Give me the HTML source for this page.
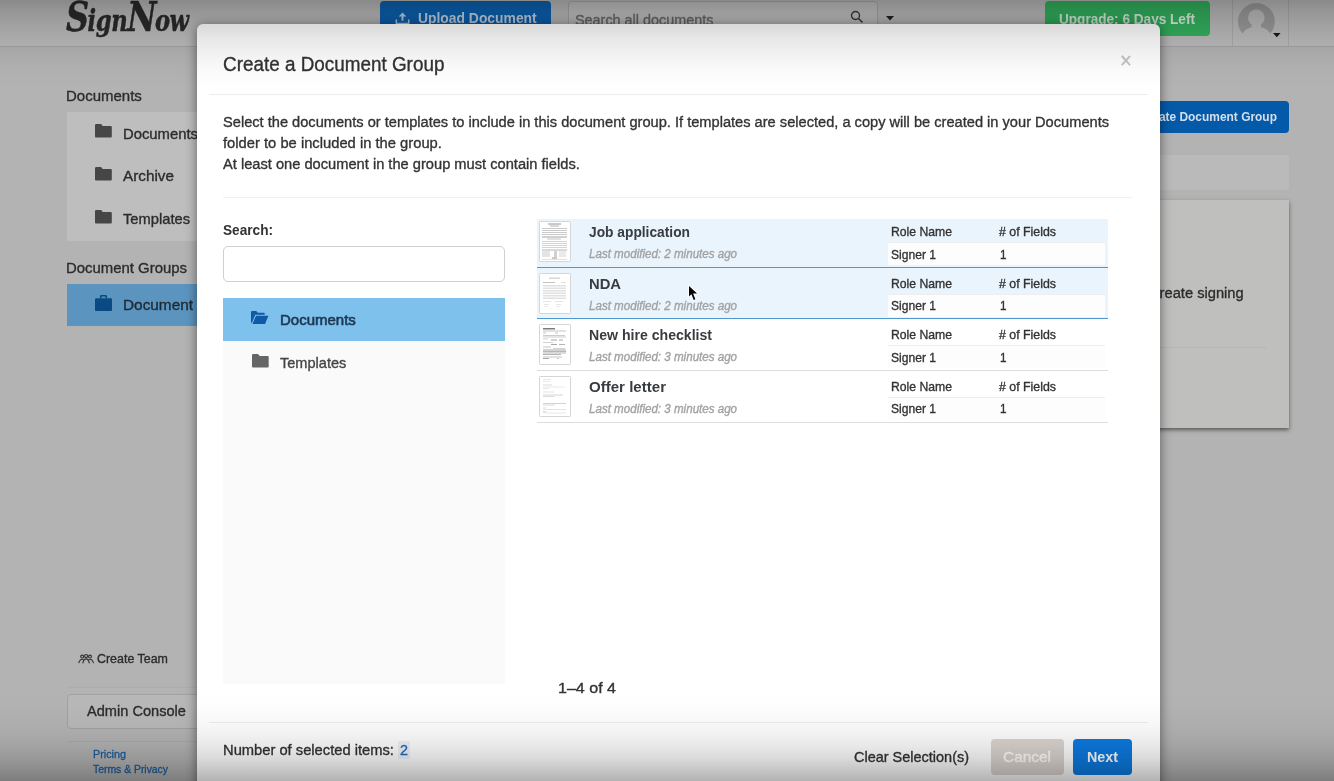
<!DOCTYPE html>
<html><head><meta charset="utf-8"><title>SignNow</title>
<style>
*{box-sizing:border-box;margin:0;padding:0}
html,body{width:1334px;height:781px;overflow:hidden}
body{background:#b3b3b3;font-family:"Liberation Sans",sans-serif;color:#333;position:relative}
.a{position:absolute}
.t{position:absolute;white-space:nowrap;line-height:1;transform-origin:0 50%;filter:blur(.3px);-webkit-text-stroke:.35px currentColor}
svg{position:absolute;overflow:visible}
#hdr{left:0;top:0;width:1334px;height:47px;background:#bcbcbc;border-bottom:1px solid #a4a4a4}
#logo{left:66px;top:0;height:46px;font-family:"DejaVu Serif","Liberation Serif",serif;font-style:italic;font-weight:bold;font-size:29px;line-height:35px;color:#2a2a2a;transform-origin:0 0;transform:scaleX(.78);-webkit-text-stroke:.5px #2a2a2a;letter-spacing:-.5px}#logo b{font-size:41px;letter-spacing:-2px}
#upload{left:380px;top:1px;width:171px;height:37px;background:#0c62b2;border-radius:4px}
#searchbox{left:568px;top:1px;width:310px;height:37px;background:#c3c3c3;border:1px solid #a8a8a8;border-radius:4px}
#upgrade{left:1045px;top:1px;width:165px;height:35px;background:#33b25e;border-radius:4px}
.vline{top:0;width:1px;height:46px;background:#ababab}
#sidepanel{left:67px;top:112px;width:131px;height:129px;background:#bebebe}
#sidesel{left:67px;top:284px;width:131px;height:42px;background:#5b95bf}
#admin{left:67px;top:694px;width:135px;height:35px;border:1px solid #a2a2a2;border-radius:4px;background:#b8b8b8}
.hl{height:1px;background:#ababab}
#cdg{left:1120px;top:101px;width:169px;height:32px;background:#045aa9;border-radius:4px}
#rbar{left:1150px;top:155px;width:139px;height:35px;background:#bababa}
#rpanel{left:1150px;top:200px;width:139px;height:228px;background:#bfbfbd;box-shadow:0 2px 4px rgba(0,0,0,.5)}
#modal{left:197px;top:24px;width:963px;height:770px;background:#fff;border-radius:6px;box-shadow:0 2px 12px rgba(0,0,0,.5)}
.ml{height:1px;background:#ececec}
#sinput{left:223px;top:246px;width:282px;height:36px;border:1px solid #d0d0d0;border-radius:5px;background:#fff}
#lpanel{left:223px;top:298px;width:282px;height:386px;background:#fafafa}
#lsel{left:223px;top:298px;width:282px;height:43px;background:#7ec1ed}
.row{left:537px;width:571px;height:52px}
.sel{background:#e9f4fd;border-bottom:1px solid #4f97cf}
.uns{border-bottom:1px solid #ddd}
.thumb{left:539px;width:32px;height:41px;background:#fff;border:1px solid #d6d6d6}
.sub{left:888px;width:217px;height:23px;background:#fdfdfd;border-top:1px solid #eceef0}
#cancel{left:991px;top:739px;width:73px;height:36px;background:#dcd6d1;border-radius:4px}
#next{left:1073px;top:739px;width:59px;height:36px;background:#0c7ae0;border-radius:4px}
#selbadge{left:398px;top:741px;width:12px;height:18px;background:#edf3f9}
#gtop{left:0;top:0;width:1334px;height:90px;background:linear-gradient(to bottom,rgba(0,0,0,.27) 0,rgba(0,0,0,.20) 12px,rgba(0,0,0,.15) 24px,rgba(0,0,0,.09) 40px,rgba(0,0,0,.05) 55px,rgba(0,0,0,.02) 70px,rgba(0,0,0,0) 90px)}
#gbot{left:0;top:690px;width:1334px;height:91px;background:linear-gradient(to bottom,rgba(0,0,0,0) 0,rgba(0,0,0,.008) 16px,rgba(0,0,0,.027) 32px,rgba(0,0,0,.047) 42px,rgba(0,0,0,.086) 55px,rgba(0,0,0,.145) 68px,rgba(0,0,0,.224) 80px,rgba(0,0,0,.30) 91px)}
</style></head><body>
<div id="hdr" class="a"></div>
<div id="logo" class="t"><b>S</b>ign<b>N</b>ow</div>
<div id="upload" class="a"></div>
<svg style="left:395.3px;top:11.6px" width="15" height="12.4" viewBox="0 0 16 14"><path d="M8 .6l4.4 4.6H9.1v4.6H6.9V5.2H3.6z" fill="#b9cfe6"/><path d="M1 8.6v4.4h14V8.6" fill="none" stroke="#b9cfe6" stroke-width="1.7"/></svg>
<div id="searchbox" class="a"></div>
<svg style="left:850px;top:10px" width="14" height="14" viewBox="0 0 14 14"><circle cx="5.5" cy="5.5" r="4" fill="none" stroke="#3a3a3a" stroke-width="1.4"/><path d="M8.5 8.5l4 4" stroke="#3a3a3a" stroke-width="1.6"/></svg>
<svg style="left:886px;top:16px" width="8" height="5" viewBox="0 0 8 5"><path d="M0 0h8l-4 4.5z" fill="#222"/></svg>
<div id="upgrade" class="a"></div>
<div class="a vline" style="left:1232px"></div>
<div class="a vline" style="left:1288px"></div>
<svg style="left:1238.1px;top:2.6px" width="36.8" height="36.8" viewBox="0 0 36.8 36.8"><circle cx="18.4" cy="18.4" r="18.4" fill="#9b9b9b"/><g fill="#bcbcbc"><circle cx="18.3" cy="14.7" r="8.3"/><path d="M13.6 20.5h9.4v4.5h-9.4z"/><path d="M2.5 38C3 28 10 23.8 18.4 23.8S33.8 28 34.3 38z"/></g></svg>
<svg style="left:1272.6px;top:33.2px" width="7.6" height="4.4" viewBox="0 0 7 4"><path d="M0 0h7l-3.5 4z" fill="#1a1a1a"/></svg>

<div id="sidepanel" class="a"></div>
<div id="sidesel" class="a"></div>
<svg style="left:94.8px;top:124.2px" width="16.8" height="13.6" viewBox="0 0 17 14" preserveAspectRatio="none"><path d="M0 1.2Q0 0 1.2 0h5l1.6 2H16q1 0 1 1v10q0 1-1 1H1q-1 0-1-1z" fill="#464646"/></svg>
<svg style="left:94.8px;top:167.1px" width="16.8" height="13.6" viewBox="0 0 17 14" preserveAspectRatio="none"><path d="M0 1.2Q0 0 1.2 0h5l1.6 2H16q1 0 1 1v10q0 1-1 1H1q-1 0-1-1z" fill="#464646"/></svg>
<svg style="left:94.8px;top:210.2px" width="16.8" height="13.6" viewBox="0 0 17 14" preserveAspectRatio="none"><path d="M0 1.2Q0 0 1.2 0h5l1.6 2H16q1 0 1 1v10q0 1-1 1H1q-1 0-1-1z" fill="#464646"/></svg>
<svg style="left:95px;top:295px" width="17" height="16" viewBox="0 0 17 16"><path d="M0 4.2q0-1 1-1h15q1 0 1 1V15q0 1-1 1H1q-1 0-1-1zM5 3V1.2Q5 0 6.2 0h4.6Q12 0 12 1.2V3h-1.6V1.6H6.6V3z" fill="#0a4a82"/></svg>
<svg style="left:77.8px;top:653.5px" width="16.2" height="9.8" viewBox="0 0 16 10"><g fill="none" stroke="#333" stroke-width="1.15"><circle cx="4" cy="2.6" r="1.5"/><circle cx="8" cy="2.1" r="1.6"/><circle cx="12" cy="2.6" r="1.5"/><path d="M0.4 9.4Q1.6 5.4 4 5.4Q5.4 5.4 6 7M4.6 9.6Q5.6 5 8 5Q10.4 5 11.4 9.6M10 7Q10.6 5.4 12 5.4Q14.4 5.4 15.6 9.4"/></g></svg>
<div class="a hl" style="left:67px;top:687px;width:131px;background:#adadad"></div>
<div id="admin" class="a"></div>
<div class="a hl" style="left:67px;top:741px;width:131px;background:#aaa"></div>
<div id="cdg" class="a"></div>
<div id="rbar" class="a"></div>
<div id="rpanel" class="a"></div>
<div class="a hl" style="left:1150px;top:347px;width:116px;background:#b6b6b4"></div>
<div class="t" style="left:418.3px;top:10.4px;font-size:15.0px;color:#c3d6ea;font-weight:bold;-webkit-text-stroke:0;transform:scaleX(0.925);">Upload Document</div>
<div class="t" style="left:574.6px;top:11.8px;font-size:15.0px;color:#6a6a6a;transform:scaleX(0.959);">Search all documents</div>
<div class="t" style="left:1059.0px;top:10.8px;font-size:15.0px;color:#d9efe0;font-weight:bold;-webkit-text-stroke:0;transform:scaleX(0.906);">Upgrade: 6 Days Left</div>
<div class="t" style="left:66.0px;top:87.8px;font-size:15.0px;color:#2c2c2c;">Documents</div>
<div class="t" style="left:123.0px;top:125.8px;font-size:15.0px;color:#2c2c2c;transform:scaleX(0.988);">Documents</div>
<div class="t" style="left:123.0px;top:168.3px;font-size:15.0px;color:#2c2c2c;transform:scaleX(1.019);">Archive</div>
<div class="t" style="left:123.0px;top:211.3px;font-size:15.0px;color:#2c2c2c;transform:scaleX(0.980);">Templates</div>
<div class="t" style="left:66.0px;top:259.8px;font-size:15.0px;color:#2c2c2c;transform:scaleX(0.994);">Document Groups</div>
<div class="t" style="left:123.0px;top:297.3px;font-size:15.0px;color:#1d2a35;transform:scaleX(1.024);">Document</div>
<div class="t" style="left:96.8px;top:652.4px;font-size:13.0px;color:#2c2c2c;transform:scaleX(0.956);">Create Team</div>
<div class="t" style="left:87.0px;top:703.0px;font-size:15.0px;color:#2c2c2c;transform:scaleX(0.973);">Admin Console</div>
<div class="t" style="left:93.0px;top:748.7px;font-size:11.0px;color:#1a5c9e;transform:scaleX(0.981);-webkit-text-stroke:.3px #1a5c9e;">Pricing</div>
<div class="t" style="left:93.0px;top:763.7px;font-size:11.0px;color:#1a5c9e;transform:scaleX(0.944);-webkit-text-stroke:.3px #1a5c9e;">Terms &amp; Privacy</div>
<div class="t" style="left:1139.0px;top:110.3px;font-size:13.0px;color:#d4dfec;font-weight:bold;-webkit-text-stroke:0;transform:scaleX(0.918);">Create Document Group</div>
<div class="t" style="left:1149.0px;top:285.2px;font-size:15.4px;color:#2c2c2c;transform:scaleX(0.954);">Create signing</div>

<div id="modal" class="a"></div>
<div class="a ml" style="left:209px;top:94px;width:939px"></div>
<div class="a ml" style="left:223px;top:197px;width:909px;background:#f1f1f1"></div>
<div class="a ml" style="left:209px;top:722px;width:939px"></div>
<div id="sinput" class="a"></div>
<div id="lpanel" class="a"></div>
<div id="lsel" class="a"></div>
<svg style="left:251px;top:311px" width="17.4" height="13.1" viewBox="0 0 19 14" preserveAspectRatio="none"><path d="M0 1.2Q0 0 1.2 0h4.6l1.5 1.8H14q1 0 1 1V4H4.6L1.5 11.5 0 13z M5.4 5H19l-3.6 9H1.6z" fill="#0f5aa6"/></svg>
<svg style="left:251.5px;top:353.8px" width="16.7" height="13.4" viewBox="0 0 17 14" preserveAspectRatio="none"><path d="M0 1.2Q0 0 1.2 0h5l1.6 2H16q1 0 1 1v10q0 1-1 1H1q-1 0-1-1z" fill="#666"/></svg>

<div class="a row sel" style="top:219px;height:49px"></div>
<div class="a row sel" style="top:268px;height:51px"></div>
<div class="a row uns" style="top:319px;height:52px"></div>
<div class="a row uns" style="top:371px;height:52px"></div>
<svg style="left:539px;top:221px" width="32" height="41" viewBox="0 0 32 41"><rect x=".5" y=".5" width="31" height="40" rx=".8" fill="#fff" stroke="#d6d6d6"/><g opacity="0.9" style="filter:blur(.35px)"><rect x="9.0" y="2.5" width="13.0" height="1.0" fill="#888"/><rect x="11.0" y="4.5" width="9.0" height="1.0" fill="#aaa"/><rect x="3.0" y="7.0" width="25.0" height="1.0" fill="#c4c4c4"/><rect x="3.0" y="9.0" width="25.0" height="1.0" fill="#c4c4c4"/><rect x="3.0" y="11.0" width="25.0" height="1.0" fill="#c4c4c4"/><rect x="3.0" y="13.0" width="25.0" height="1.0" fill="#c4c4c4"/><rect x="3.0" y="15.5" width="25.0" height="1.0" fill="#999"/><rect x="8.0" y="17.5" width="14.0" height="1.0" fill="#bbb"/><rect x="3.0" y="20.0" width="25.0" height="1.0" fill="#cfcfcf"/><rect x="3.0" y="22.0" width="25.0" height="1.0" fill="#cfcfcf"/><rect x="3.0" y="24.0" width="25.0" height="1.0" fill="#cfcfcf"/><rect x="3.0" y="26.0" width="25.0" height="1.0" fill="#cfcfcf"/><rect x="3.0" y="28.5" width="25.0" height="1.0" fill="#aaa"/><rect x="3.0" y="30.5" width="8.0" height="1.0" fill="#c4c4c4"/><rect x="15.0" y="30.5" width="3.0" height="1.0" fill="#999"/><rect x="20.0" y="30.5" width="7.0" height="1.0" fill="#d0d0d0"/><rect x="3.0" y="32.5" width="8.0" height="1.0" fill="#c4c4c4"/><rect x="15.0" y="32.5" width="3.0" height="1.0" fill="#999"/><rect x="20.0" y="32.5" width="7.0" height="1.0" fill="#d0d0d0"/><rect x="3.0" y="34.5" width="8.0" height="1.0" fill="#c4c4c4"/><rect x="15.0" y="34.5" width="3.0" height="1.0" fill="#999"/><rect x="20.0" y="34.5" width="7.0" height="1.0" fill="#d0d0d0"/><rect x="13.0" y="36.5" width="5.0" height="1.0" fill="#888"/><rect x="3.0" y="38.0" width="25.0" height="1.0" fill="#ddd"/></g></svg>
<div class="a sub" style="top:242px"></div>
<svg style="left:539px;top:273px" width="32" height="41" viewBox="0 0 32 41"><rect x=".5" y=".5" width="31" height="40" rx=".8" fill="#fff" stroke="#d6d6d6"/><g opacity="0.6" style="filter:blur(.35px)"><rect x="10.0" y="4.5" width="11.0" height="1.5" fill="#bbb"/><rect x="4.0" y="9.0" width="12.0" height="1.0" fill="#999"/><rect x="22.0" y="9.0" width="5.0" height="1.0" fill="#ccc"/><rect x="4.0" y="12.0" width="23.0" height="1.0" fill="#cdcdcd"/><rect x="4.0" y="13.5" width="23.0" height="1.0" fill="#cdcdcd"/><rect x="4.0" y="15.0" width="23.0" height="1.0" fill="#cdcdcd"/><rect x="4.0" y="17.0" width="23.0" height="1.0" fill="#cdcdcd"/><rect x="4.0" y="18.5" width="23.0" height="1.0" fill="#cdcdcd"/><rect x="4.0" y="20.0" width="23.0" height="1.0" fill="#cdcdcd"/><rect x="4.0" y="22.0" width="23.0" height="1.0" fill="#cdcdcd"/><rect x="4.0" y="23.5" width="23.0" height="1.0" fill="#cdcdcd"/><rect x="4.0" y="25.0" width="23.0" height="1.0" fill="#cdcdcd"/><rect x="4.0" y="28.0" width="8.0" height="1.0" fill="#d5d5d5"/><rect x="16.0" y="28.0" width="8.0" height="1.0" fill="#d5d5d5"/><rect x="5.0" y="31.0" width="5.0" height="1.0" fill="#d8d8d8"/><rect x="17.0" y="31.0" width="5.0" height="1.0" fill="#d8d8d8"/><rect x="5.0" y="33.0" width="4.0" height="1.0" fill="#ddd"/><rect x="17.0" y="33.0" width="4.0" height="1.0" fill="#ddd"/></g></svg>
<div class="a sub" style="top:294px"></div>
<svg style="left:539px;top:324px" width="32" height="41" viewBox="0 0 32 41"><rect x=".5" y=".5" width="31" height="40" rx=".8" fill="#fff" stroke="#d6d6d6"/><g opacity="0.85" style="filter:blur(.35px)"><rect x="4.0" y="4.0" width="12.0" height="1.5" fill="#666"/><rect x="4.0" y="6.5" width="23.0" height="1.0" fill="#bbb"/><rect x="4.0" y="8.5" width="3.0" height="1.0" fill="#bbb"/><rect x="16.0" y="8.5" width="3.0" height="1.0" fill="#bbb"/><rect x="4.0" y="11.0" width="22.0" height="1.0" fill="#c4c4c4"/><rect x="4.0" y="12.5" width="23.0" height="1.0" fill="#c4c4c4"/><rect x="4.0" y="14.5" width="5.0" height="1.0" fill="#ccc"/><rect x="12.0" y="15.5" width="6.0" height="1.0" fill="#999"/><rect x="20.0" y="15.5" width="4.0" height="1.0" fill="#999"/><rect x="4.0" y="18.0" width="10.0" height="1.0" fill="#ccc"/><rect x="12.0" y="20.0" width="6.0" height="1.0" fill="#999"/><rect x="20.0" y="20.0" width="6.0" height="1.0" fill="#aaa"/><rect x="4.0" y="22.5" width="8.0" height="1.0" fill="#bbb"/><rect x="14.0" y="24.0" width="12.0" height="1.0" fill="#ccc"/><rect x="4.0" y="25.5" width="23.0" height="1.0" fill="#999"/><rect x="4.0" y="27.0" width="23.0" height="1.0" fill="#aaa"/><rect x="4.0" y="28.5" width="23.0" height="1.0" fill="#aaa"/><rect x="4.0" y="30.0" width="18.0" height="1.0" fill="#aaa"/><rect x="4.0" y="32.5" width="19.0" height="1.0" fill="#bbb"/><rect x="4.0" y="34.0" width="6.0" height="1.0" fill="#999"/><rect x="18.0" y="34.0" width="2.0" height="1.0" fill="#bbb"/></g></svg>
<div class="a sub" style="top:345px"></div>
<svg style="left:539px;top:376px" width="32" height="41" viewBox="0 0 32 41"><rect x=".5" y=".5" width="31" height="40" rx=".8" fill="#fff" stroke="#d6d6d6"/><g opacity="0.7" style="filter:blur(.35px)"><rect x="4.0" y="3.0" width="8.0" height="1.0" fill="#ddd"/><rect x="4.0" y="5.0" width="7.0" height="1.0" fill="#ddd"/><rect x="4.0" y="8.5" width="9.0" height="1.0" fill="#ccc"/><rect x="4.0" y="10.5" width="22.0" height="1.0" fill="#e0e0e0"/><rect x="4.0" y="12.0" width="6.0" height="1.0" fill="#ddd"/><rect x="4.0" y="15.5" width="11.0" height="1.0" fill="#d8d8d8"/><rect x="4.0" y="18.5" width="20.0" height="1.0" fill="#c4c4c4"/><rect x="4.0" y="20.0" width="12.0" height="1.0" fill="#d0d0d0"/><rect x="4.0" y="27.0" width="23.0" height="1.0" fill="#c0c0c0"/><rect x="4.0" y="28.5" width="12.0" height="1.0" fill="#ccc"/><rect x="4.0" y="31.5" width="3.0" height="1.0" fill="#ccc"/><rect x="4.0" y="33.0" width="23.0" height="1.0" fill="#d8d8d8"/><rect x="4.0" y="35.5" width="3.0" height="1.0" fill="#aaa"/><rect x="7.0" y="36.5" width="20.0" height="1.0" fill="#ddd"/></g></svg>
<div class="a sub" style="top:397px"></div>
<div id="selbadge" class="a"></div>
<div id="cancel" class="a"></div>
<div id="next" class="a"></div>
<div class="t" style="left:223.3px;top:54.7px;font-size:19.3px;color:#333;transform:scaleX(0.979);">Create a Document Group</div>
<div class="t" style="left:1119.6px;top:49.7px;font-size:22.0px;color:#c2c2c2;transform:scaleX(0.918);">×</div>
<div class="t" style="left:223.0px;top:113.6px;font-size:15.3px;color:#333;transform:scaleX(0.956);">Select the documents or templates to include in this document group. If templates are selected, a copy will be created in your Documents</div>
<div class="t" style="left:223.0px;top:135.0px;font-size:15.3px;color:#333;transform:scaleX(0.964);">folder to be included in the group.</div>
<div class="t" style="left:223.0px;top:156.3px;font-size:15.3px;color:#333;transform:scaleX(0.958);">At least one document in the group must contain fields.</div>
<div class="t" style="left:222.7px;top:222.4px;font-size:15.0px;color:#333;font-weight:bold;-webkit-text-stroke:0;transform:scaleX(0.910);">Search:</div>
<div class="t" style="left:280.0px;top:311.9px;font-size:15.0px;color:#1d3650;-webkit-text-stroke:.6px #1d3650;">Documents</div>
<div class="t" style="left:280.0px;top:354.8px;font-size:15.0px;color:#444;transform:scaleX(0.970);">Templates</div>
<div class="t" style="left:589.0px;top:224.3px;font-size:15.0px;color:#383b40;font-weight:bold;-webkit-text-stroke:0;transform:scaleX(0.918);">Job application</div>
<div class="t" style="left:589.0px;top:248.3px;font-size:12.0px;color:#a2a2a2;font-style:italic;transform:scaleX(0.965);">Last modified: 2 minutes ago</div>
<div class="t" style="left:891.0px;top:225.0px;font-size:13.0px;color:#333;transform:scaleX(0.938);">Role Name</div>
<div class="t" style="left:999.0px;top:225.0px;font-size:13.0px;color:#333;transform:scaleX(0.950);"># of Fields</div>
<div class="t" style="left:891.0px;top:247.5px;font-size:13.0px;color:#333;transform:scaleX(0.929);">Signer 1</div>
<div class="t" style="left:999.5px;top:247.5px;font-size:13.0px;color:#333;transform:scaleX(0.898);">1</div>
<div class="t" style="left:589.0px;top:275.8px;font-size:15.0px;color:#383b40;font-weight:bold;-webkit-text-stroke:0;transform:scaleX(0.985);">NDA</div>
<div class="t" style="left:589.0px;top:299.8px;font-size:12.0px;color:#a2a2a2;font-style:italic;transform:scaleX(0.965);">Last modified: 2 minutes ago</div>
<div class="t" style="left:891.0px;top:276.5px;font-size:13.0px;color:#333;transform:scaleX(0.938);">Role Name</div>
<div class="t" style="left:999.0px;top:276.5px;font-size:13.0px;color:#333;transform:scaleX(0.950);"># of Fields</div>
<div class="t" style="left:891.0px;top:299.0px;font-size:13.0px;color:#333;transform:scaleX(0.929);">Signer 1</div>
<div class="t" style="left:999.5px;top:299.0px;font-size:13.0px;color:#333;transform:scaleX(0.898);">1</div>
<div class="t" style="left:589.0px;top:327.3px;font-size:15.0px;color:#383b40;font-weight:bold;-webkit-text-stroke:0;transform:scaleX(0.940);">New hire checklist</div>
<div class="t" style="left:589.0px;top:351.3px;font-size:12.0px;color:#a2a2a2;font-style:italic;transform:scaleX(0.965);">Last modified: 3 minutes ago</div>
<div class="t" style="left:891.0px;top:328.0px;font-size:13.0px;color:#333;transform:scaleX(0.938);">Role Name</div>
<div class="t" style="left:999.0px;top:328.0px;font-size:13.0px;color:#333;transform:scaleX(0.950);"># of Fields</div>
<div class="t" style="left:891.0px;top:350.5px;font-size:13.0px;color:#333;transform:scaleX(0.929);">Signer 1</div>
<div class="t" style="left:999.5px;top:350.5px;font-size:13.0px;color:#333;transform:scaleX(0.898);">1</div>
<div class="t" style="left:589.0px;top:378.8px;font-size:15.0px;color:#383b40;font-weight:bold;-webkit-text-stroke:0;transform:scaleX(1.004);">Offer letter</div>
<div class="t" style="left:589.0px;top:402.8px;font-size:12.0px;color:#a2a2a2;font-style:italic;transform:scaleX(0.965);">Last modified: 3 minutes ago</div>
<div class="t" style="left:891.0px;top:379.5px;font-size:13.0px;color:#333;transform:scaleX(0.938);">Role Name</div>
<div class="t" style="left:999.0px;top:379.5px;font-size:13.0px;color:#333;transform:scaleX(0.950);"># of Fields</div>
<div class="t" style="left:891.0px;top:402.0px;font-size:13.0px;color:#333;transform:scaleX(0.929);">Signer 1</div>
<div class="t" style="left:999.5px;top:402.0px;font-size:13.0px;color:#333;transform:scaleX(0.898);">1</div>
<div class="t" style="left:558.0px;top:680.3px;font-size:15.0px;color:#333;transform:scaleX(1.070);">1–4 of 4</div>
<div class="t" style="left:223.0px;top:741.8px;font-size:15.0px;color:#333;transform:scaleX(0.981);">Number of selected items:</div>
<div class="t" style="left:400.0px;top:741.8px;font-size:15.0px;color:#1d6fb8;transform:scaleX(0.959);">2</div>
<div class="t" style="left:854.0px;top:749.1px;font-size:15.0px;color:#333;transform:scaleX(0.965);">Clear Selection(s)</div>
<div class="t" style="left:1003.0px;top:749.1px;font-size:15.0px;color:#fff;transform:scaleX(1.028);">Cancel</div>
<div class="t" style="left:1087.0px;top:749.1px;font-size:15.0px;color:#fff;font-weight:bold;-webkit-text-stroke:0;transform:scaleX(0.953);">Next</div>
<svg style="left:688.8px;top:285.6px" width="10" height="16" viewBox="0 0 10 16"><path d="M0 0V10.4L2.4 8.2 4.7 13.9 6.4 13.2 4.1 7.6H8.1Z" fill="#fff" stroke="#fff" stroke-width="2" stroke-linejoin="round" opacity=".85"/><path d="M0 0V10.4L2.4 8.2 4.7 13.9 6.4 13.2 4.1 7.6H8.1Z" fill="#050505"/></svg>
<div id="gtop" class="a"></div>
<div id="gbot" class="a"></div>
</body></html>
